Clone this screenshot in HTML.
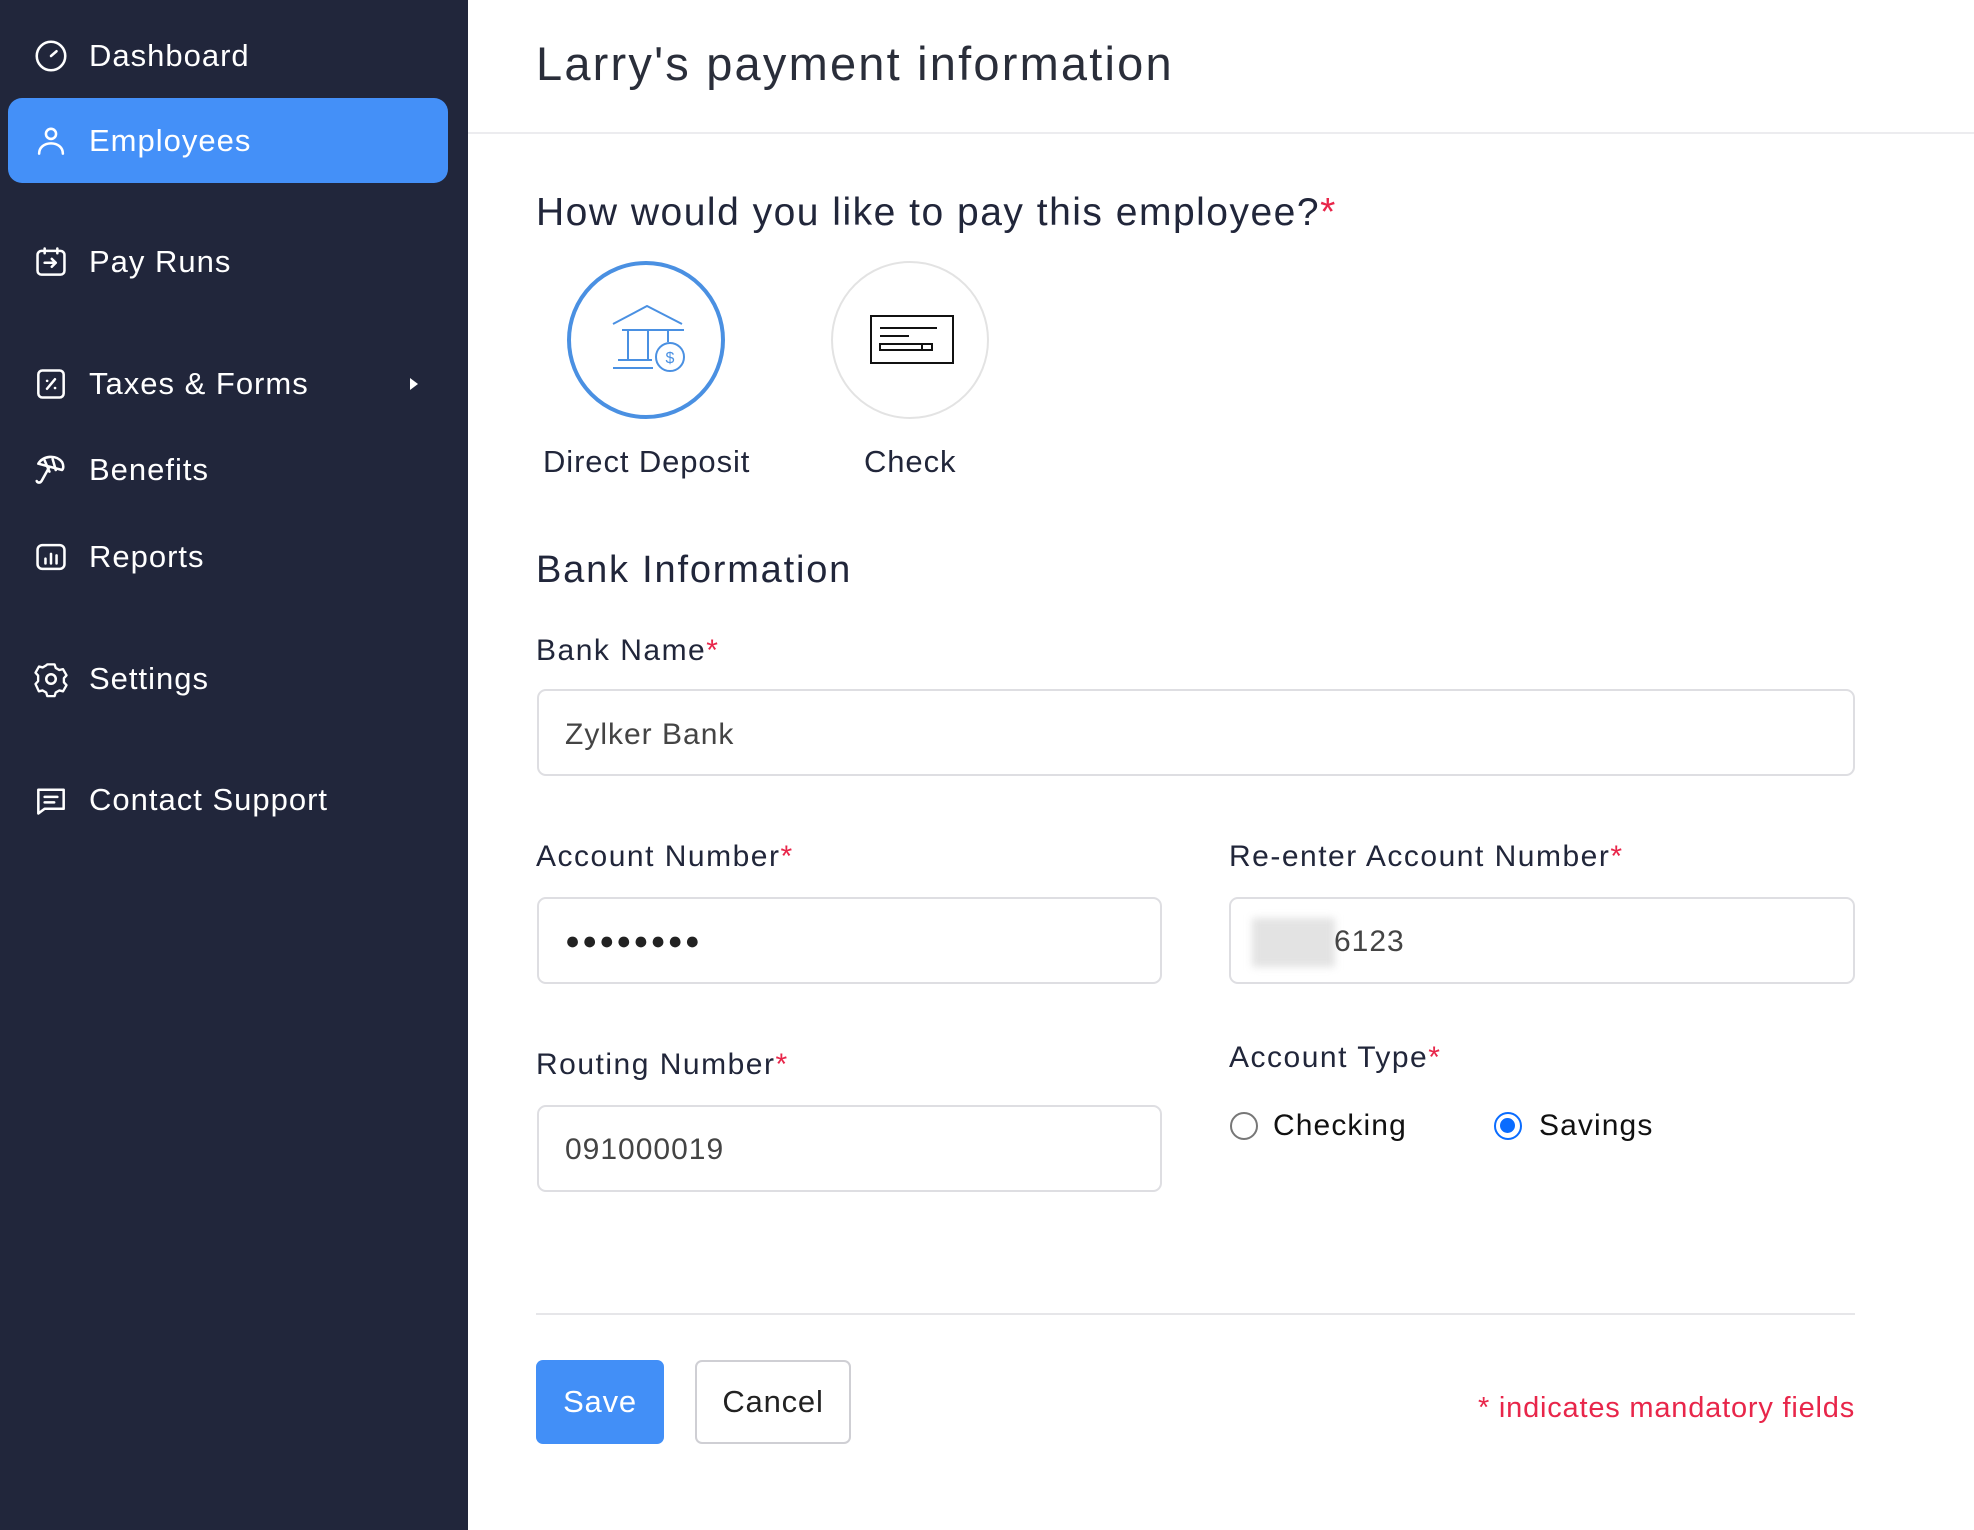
<!DOCTYPE html>
<html><head><meta charset="utf-8"><style>
*{margin:0;padding:0;box-sizing:border-box}
body{width:1974px;height:1530px;position:relative;background:#fff;font-family:"Liberation Sans",sans-serif;color:#21263a;overflow:hidden}
.a{position:absolute;white-space:nowrap}
#side{position:absolute;left:0;top:0;width:468px;height:1530px;background:#21263b}
.nav{position:absolute;left:89px;color:#fff;font-size:31px;line-height:36px;letter-spacing:1px}
.ic{position:absolute;left:32px;width:38px;height:38px}
.pill{position:absolute;left:8px;top:98px;width:440px;height:85px;background:#4490f8;border-radius:14px}
.lbl{font-size:30px;line-height:34px;color:#21263a;letter-spacing:1.5px}
.r{color:#e8264a}
.inp{position:absolute;border:2px solid #dedee2;border-radius:9px;background:#fff}
.val{font-size:30px;color:#444;line-height:34px;letter-spacing:1px}
</style></head><body>
<div id="side">
<div class="pill"></div>
<svg class="ic" style="top:37px" viewBox="0 0 24 24" fill="none" stroke="#fff" stroke-width="1.6" stroke-linecap="round"><circle cx="12" cy="12" r="9"/><path d="M12 12l3.5-3"/></svg>
<div class="nav" style="top:38px">Dashboard</div>
<svg class="ic" style="top:122px" viewBox="0 0 24 24" fill="none" stroke="#fff" stroke-width="1.6" stroke-linecap="round"><circle cx="12" cy="7.5" r="3.2"/><path d="M4.5 20c0-4 3.3-6.5 7.5-6.5s7.5 2.5 7.5 6.5"/></svg>
<div class="nav" style="top:123px">Employees</div>
<svg class="ic" style="top:243px" viewBox="0 0 24 24" fill="none" stroke="#fff" stroke-width="1.6" stroke-linecap="round" stroke-linejoin="round"><rect x="3.5" y="5" width="17" height="15" rx="2.5"/><path d="M8 3.5v3M16 3.5v3M8 12.5h7M12.5 10l2.5 2.5-2.5 2.5"/></svg>
<div class="nav" style="top:244px">Pay Runs</div>
<svg class="ic" style="top:365px" viewBox="0 0 24 24" fill="none" stroke="#fff" stroke-width="1.6" stroke-linecap="round"><rect x="4" y="3.5" width="16" height="17" rx="2.5"/><path d="M9.5 15l5-6M9.5 10h.1M14.5 14.5h.1"/></svg>
<div class="nav" style="top:366px">Taxes &amp; Forms</div>
<svg class="a" style="left:408px;top:376px" width="12" height="16" viewBox="0 0 12 16"><path d="M2 2l8 6-8 6z" fill="#fff"/></svg>
<svg class="ic" style="top:451px" viewBox="0 0 24 24" fill="none" stroke="#fff" stroke-width="1.6" stroke-linecap="round" stroke-linejoin="round"><path d="M4 8c3-5 11-6 15-1 1 2 1 4 0 5L4 8z"/><path d="M8 6l3 7M13 5l2 7M11 10l-5 9c-.8 1.3-2.5 1.2-3 0"/></svg>
<div class="nav" style="top:452px">Benefits</div>
<svg class="ic" style="top:538px" viewBox="0 0 24 24" fill="none" stroke="#fff" stroke-width="1.6" stroke-linecap="round"><rect x="3.5" y="4.5" width="17" height="15" rx="3"/><path d="M8.5 16v-3M12 16v-6M15.5 16v-5"/></svg>
<div class="nav" style="top:539px">Reports</div>
<svg class="ic" style="top:660px" viewBox="0 0 24 24" fill="none" stroke="#fff" stroke-width="1.6" stroke-linejoin="round"><path d="M9.5 3.5h5l.8 2.5 2.4 1.4 2.6-.6 2.4 4.2-1.8 2 0 2.8 1.8 2-2.4 4.2-2.6-.6-2.4 1.4-.8 2.5h-5l-.8-2.5-2.4-1.4-2.6.6L1.4 17l1.8-2V11.2l-1.8-2L3.8 5l2.6.6L8.7 4.2z" transform="scale(.92) translate(1 -.5)"/><circle cx="12" cy="12" r="3"/></svg>
<div class="nav" style="top:661px">Settings</div>
<svg class="ic" style="top:781px" viewBox="0 0 24 24" fill="none" stroke="#fff" stroke-width="1.6" stroke-linecap="round" stroke-linejoin="round"><path d="M4 5.5h16v12H8l-4 3z"/><path d="M8 10h8M8 13.5h6"/></svg>
<div class="nav" style="top:782px">Contact Support</div>
</div>

<div class="a" style="left:536px;top:37px;font-size:47px;line-height:54px;color:#2a2e3a;letter-spacing:2.2px">Larry's payment information</div>
<div class="a" style="left:468px;top:132px;width:1506px;height:2px;background:#ececef"></div>

<div class="a" style="left:536px;top:191px;font-size:39px;line-height:44px;letter-spacing:1.5px">How would you like to pay this employee?<span class="r">*</span></div>

<div class="a" style="left:567px;top:261px;width:158px;height:158px;border:4px solid #4a90e2;border-radius:50%"></div>
<svg class="a" style="left:610px;top:305px" width="80" height="70" viewBox="0 0 80 70" fill="none" stroke="#4a90e2" stroke-width="2"><path d="M3 19L37 1l35 18"/><path d="M12 25h62M18 25v30M38 25v30M58 25v12M8 55h34M3 63h40"/><circle cx="60" cy="52" r="14"/><text x="60" y="58" font-size="16" text-anchor="middle" fill="#4a90e2" stroke="none" font-family="Liberation Sans">$</text></svg>
<div class="a" style="left:543px;top:444px;font-size:31px;line-height:36px;letter-spacing:0.9px">Direct Deposit</div>

<div class="a" style="left:831px;top:261px;width:158px;height:158px;border:2px solid #e3e3e3;border-radius:50%"></div>
<svg class="a" style="left:869px;top:314px" width="86" height="52" viewBox="0 0 86 52" fill="none" stroke="#111" stroke-width="2"><rect x="2" y="2" width="82" height="47"/><path d="M11 14h57M11 22h29"/><rect x="11" y="30" width="52" height="6"/><path d="M53 30v6"/></svg>
<div class="a" style="left:864px;top:444px;font-size:31px;line-height:36px;letter-spacing:0.9px">Check</div>

<div class="a" style="left:536px;top:548px;font-size:38px;line-height:44px;letter-spacing:1.8px">Bank Information</div>

<div class="a lbl" style="left:536px;top:634px">Bank Name<span class="r">*</span></div>
<div class="inp" style="left:537px;top:689px;width:1318px;height:87px"></div>
<div class="a val" style="left:565px;top:718px">Zylker Bank</div>

<div class="a lbl" style="left:536px;top:840px">Account Number<span class="r">*</span></div>
<div class="inp" style="left:537px;top:897px;width:625px;height:87px"></div>
<div class="a" style="left:565px;top:924px;font-size:25px;letter-spacing:2px;color:#222;line-height:34px">●●●●●●●●</div>

<div class="a lbl" style="left:1229px;top:840px">Re-enter Account Number<span class="r">*</span></div>
<div class="inp" style="left:1229px;top:897px;width:626px;height:87px"></div>
<div class="a" style="left:1252px;top:918px;width:83px;height:49px;background:#e3e3e3;filter:blur(4px)"></div>
<div class="a val" style="left:1334px;top:925px">6123</div>

<div class="a lbl" style="left:536px;top:1048px">Routing Number<span class="r">*</span></div>
<div class="inp" style="left:537px;top:1105px;width:625px;height:87px"></div>
<div class="a val" style="left:565px;top:1133px">091000019</div>

<div class="a lbl" style="left:1229px;top:1041px">Account Type<span class="r">*</span></div>
<div class="a" style="left:1230px;top:1112px;width:28px;height:28px;border:2px solid #777;border-radius:50%"></div>
<div class="a lbl" style="left:1273px;top:1109px;color:#111;letter-spacing:1.1px">Checking</div>
<div class="a" style="left:1494px;top:1112px;width:28px;height:28px;border:2.5px solid #0a6cff;border-radius:50%"><div style="position:absolute;left:4px;top:4px;width:15px;height:15px;border-radius:50%;background:#0a6cff"></div></div>
<div class="a lbl" style="left:1539px;top:1109px;color:#111;letter-spacing:1.1px">Savings</div>

<div class="a" style="left:536px;top:1313px;width:1319px;height:2px;background:#e6e6e9"></div>

<div class="a" style="left:536px;top:1360px;width:128px;height:84px;background:#428ff7;border-radius:7px;color:#fff;font-size:31px;line-height:84px;text-align:center;letter-spacing:0.8px">Save</div>
<div class="a" style="left:695px;top:1360px;width:156px;height:84px;border:2px solid #cfcfd4;border-radius:7px;font-size:31px;line-height:80px;text-align:center;color:#222;letter-spacing:0.8px">Cancel</div>
<div class="a" style="right:119px;top:1391px;font-size:29px;line-height:34px;color:#e8264a;letter-spacing:0.8px">* indicates mandatory fields</div>
</body></html>
